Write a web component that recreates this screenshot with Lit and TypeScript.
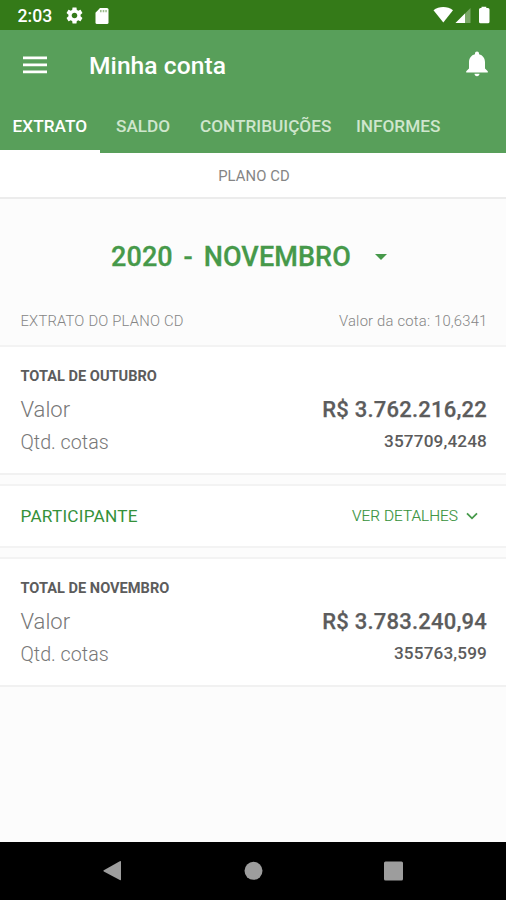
import { LitElement, html, css } from "lit";
import { customElement, property } from "lit/decorators.js";

@customElement("status-bar")
class StatusBar extends LitElement {
  static styles = css`
    :host { display: flex; height: 30px; background: #347a18; color: #fff; align-items: center; }
    .time { font-size: 17.6px; font-weight: 500; margin-left: 17.500px; line-height: 30px; width: 48px; padding-top: 2px; box-sizing: border-box; }
    svg { display: block; fill: #fff; }
    .gear { width: 17px; height: 17px; margin-top: 1px; }
    .card { width: 14px; height: 16px; margin-left: 12px; margin-top: 1px; }
    .right { margin-left: auto; }
  `;
  render() {
    return html`
      <span class="time">2:03</span>
      <svg class="gear" viewBox="1.5 1.5 21 21"><path d="M19.43 12.98c.04-.32.07-.64.07-.98s-.03-.66-.07-.98l2.11-1.65c.19-.15.24-.42.12-.64l-2-3.46c-.12-.22-.39-.3-.61-.22l-2.49 1c-.52-.4-1.08-.73-1.69-.98l-.38-2.65C14.46 2.18 14.25 2 14 2h-4c-.25 0-.46.18-.49.42l-.38 2.65c-.61.25-1.17.59-1.69.98l-2.49-1c-.23-.09-.49 0-.61.22l-2 3.46c-.13.22-.07.49.12.64l2.11 1.65c-.04.32-.07.65-.07.98s.03.66.07.98l-2.11 1.65c-.19.15-.24.42-.12.64l2 3.46c.12.22.39.3.61.22l2.49-1c.52.4 1.08.73 1.69.98l.38 2.65c.03.24.24.42.49.42h4c.25 0 .46-.18.49-.42l.38-2.65c.61-.25 1.17-.59 1.69-.98l2.49 1c.23.09.49 0 .61-.22l2-3.46c.12-.22.07-.49-.12-.64l-2.11-1.65zM12 15.5c-1.93 0-3.5-1.57-3.5-3.5s1.57-3.5 3.5-3.5 3.5 1.57 3.5 3.5-1.57 3.5-3.5 3.5z"/></svg>
      <svg class="card" viewBox="0 0 14 16"><path d="M5 0h7a1.500 1.500 0 0 1 1.500 1.500v13A1.500 1.500 0 0 1 12 16H2A1.500 1.500 0 0 1 .5 14.500V4.800z"/><path d="M5 2h1.600v2.300H5zM7.700 2h1.600v2.300H7.700zM10.300 2h1.500v2.300h-1.500z" fill="#9dbd8e"/></svg>
      <svg class="right" width="73" height="30" viewBox="433 0 73 30">
        <path d="M433.500 10.300C439 6 447.500 6 453 10.300L443.300 22.500z"/>
        <path d="M455.500 23L470.500 8v15z" fill-opacity=".35"/>
        <path d="M455.500 23L465 13.500V23z"/>
        <path d="M481.500 8V6.800h4.800V8h1.700a1.500 1.500 0 0 1 1.500 1.500v12.200a1.500 1.500 0 0 1-1.500 1.500h-7.500a1.500 1.500 0 0 1-1.500-1.500V9.500A1.500 1.500 0 0 1 480.500 8z"/>
      </svg>
    `;
  }
}

@customElement("app-header")
class AppHeader extends LitElement {
  static styles = css`
    :host { display: block; height: 123px; background: #589f5a; color: #fff; }
    .bar { display: flex; align-items: center; height: 70px; }
    .menu { width: 24px; height: 18px; margin-left: 23px; margin-top: -1px; }
    .title { margin-left: 42px; font-size: 24.6px; font-weight: 500; line-height: 30px; margin-top: 1px; letter-spacing: .05px; }
    .bell { width: 22px; height: 26px; margin-left: auto; margin-right: 18px; margin-top: -2px; }
    svg { display: block; fill: #fff; }
    .tabs { display: flex; height: 53px; font-size: 17.2px; font-weight: 500; }
    .tab { box-sizing: border-box; height: 53px; line-height: 53px; color: #cfe6cd; white-space: nowrap; }
    .tab:nth-child(1) { width: 100px; padding-left: 12.500px; color: #fff; border-bottom: 3px solid #fff; letter-spacing: .05px; }
    .tab:nth-child(2) { width: 84px; padding-left: 16px; }
    .tab:nth-child(3) { width: 156px; padding-left: 16px; }
    .tab:nth-child(4) { padding-left: 16px; }
  `;
  render() {
    return html`
      <div class="bar">
        <svg class="menu" viewBox="0 0 24 18"><path d="M0 0.500h24v2.700H0zM0 7.500h24v2.700H0zM0 14.500h24v2.700H0z"/></svg>
        <span class="title">Minha conta</span>
        <svg class="bell" viewBox="1 0 22 26"><path d="M12 .6c1.200 0 2 .8 2 2v.7c3.900.9 6 4.200 6 8v6.200l2.800 2.700v1.300H1.200v-1.300L4 17.500v-6.200c0-3.800 2.100-7.100 6-8v-.7c0-1.200.8-2 2-2zM9.500 22.700h5c0 1.500-1.100 2.500-2.500 2.500s-2.500-1-2.500-2.500z"/></svg>
      </div>
      <div class="tabs">
        ${["EXTRATO", "SALDO", "CONTRIBUIÇÕES", "INFORMES"].map((t) => html`<span class="tab">${t}</span>`)}
      </div>
    `;
  }
}

@customElement("total-card")
class TotalCard extends LitElement {
  @property() heading = "";
  @property() amount = "";
  @property() quotas = "";
  static styles = css`
    :host { display: block; box-sizing: border-box; height: 130px; padding: 19px 19px 0 20.500px; background: #fff; border-top: 2px solid #f3f3f3; border-bottom: 2px solid #f1f1f1; }
    .heading { font-size: 14.6px; font-weight: 700; color: #5c5c5c; line-height: 20px; height: 25px; }
    .row { display: flex; justify-content: space-between; height: 33px; line-height: 36px; white-space: nowrap; }
    .label { font-size: 19.700px; font-weight: 300; color: #777; line-height: 37px; }
    .big .label { font-size: 22px; }
    .value { font-size: 17.200px; font-weight: 500; color: #5c5c5c; letter-spacing: .13px; line-height: 35px; }
    .big .value { font-size: 22px; letter-spacing: .22px; line-height: 37px; -webkit-text-stroke: .25px #5c5c5c; }
  `;
  render() {
    return html`
      <div class="heading">${this.heading}</div>
      <div class="row big"><span class="label">Valor</span><span class="value">${this.amount}</span></div>
      <div class="row"><span class="label">Qtd. cotas</span><span class="value">${this.quotas}</span></div>
    `;
  }
}

@customElement("nav-bar")
class NavBar extends LitElement {
  static styles = css`
    :host { display: block; height: 58px; background: #000; }
    svg { display: block; fill: #9d9d9d; }
  `;
  render() {
    return html`<svg width="506" height="58" viewBox="0 842 506 58">
      <path d="M103.800 870.200L119.800 861.300q1.200-.6 1.200.6v17.600q0 1.200-1.200.6L103.800 871.400q-1-.6 0-1.200z"/>
      <circle cx="253.500" cy="870.800" r="9"/>
      <rect x="384" y="861.500" width="19" height="19" rx="1.500"/>
    </svg>`;
  }
}

@customElement("app-root")
class AppRoot extends LitElement {
  static styles = css`
    :host { display: flex; flex-direction: column; height: 900px; width: 506px; overflow: hidden; background: #fcfcfc; font-family: Roboto, "Liberation Sans", sans-serif; }
    .plan { box-sizing: border-box; height: 46px; background: #fff; border-bottom: 2px solid #ececec; text-align: center; font-size: 14.8px; line-height: 46px; color: #858585; letter-spacing: .1px; padding-left: 2px; }
    .period { display: flex; align-items: center; height: 116px; padding-left: 111px; color: #46994a; font-size: 27px; font-weight: 500; letter-spacing: .1px; word-spacing: 4px; white-space: nowrap; -webkit-text-stroke: .3px #46994a; }
    .caret { width: 12px; height: 6px; margin-left: auto; margin-right: 119px; fill: #46994a; }
    .info { display: flex; justify-content: space-between; height: 30px; line-height: 12px; padding: 0 18.500px 0 20.500px; font-size: 14.8px; font-weight: 300; color: #858585; letter-spacing: .2px; }
    .participant { box-sizing: border-box; height: 64px; margin: 9px 0; background: #fff; border-top: 2px solid #f3f3f3; border-bottom: 2px solid #f3f3f3; display: flex; align-items: center; padding: 0 28px 0 20.500px; }
    .name { font-size: 17.2px; color: #35913a; letter-spacing: .22px; }
    .details { margin-left: auto; font-size: 15.400px; font-weight: 300; color: #35913a; -webkit-text-stroke: .15px #35913a; }
    .chevron { width: 12px; height: 8px; margin-left: 8px; fill: none; stroke: #46994a; stroke-width: 1.800; }
    .space { flex: 1; }
  `;
  render() {
    return html`
      <status-bar></status-bar>
      <app-header></app-header>
      <div class="plan">PLANO CD</div>
      <div class="period"><span>2020 - NOVEMBRO</span><svg class="caret" viewBox="0 0 12 6"><path d="M0 0h12L6 6z"/></svg></div>
      <div class="info"><span>EXTRATO DO PLANO CD</span><span>Valor da cota: 10,6341</span></div>
      <total-card heading="TOTAL DE OUTUBRO" amount="R$ 3.762.216,22" quotas="357709,4248"></total-card>
      <div class="participant">
        <span class="name">PARTICIPANTE</span>
        <span class="details">VER DETALHES</span>
        <svg class="chevron" viewBox="0 0 12 8"><path d="M1 1.300l5 5 5-5"/></svg>
      </div>
      <total-card heading="TOTAL DE NOVEMBRO" amount="R$ 3.783.240,94" quotas="355763,599"></total-card>
      <div class="space"></div>
      <nav-bar></nav-bar>
    `;
  }
}
